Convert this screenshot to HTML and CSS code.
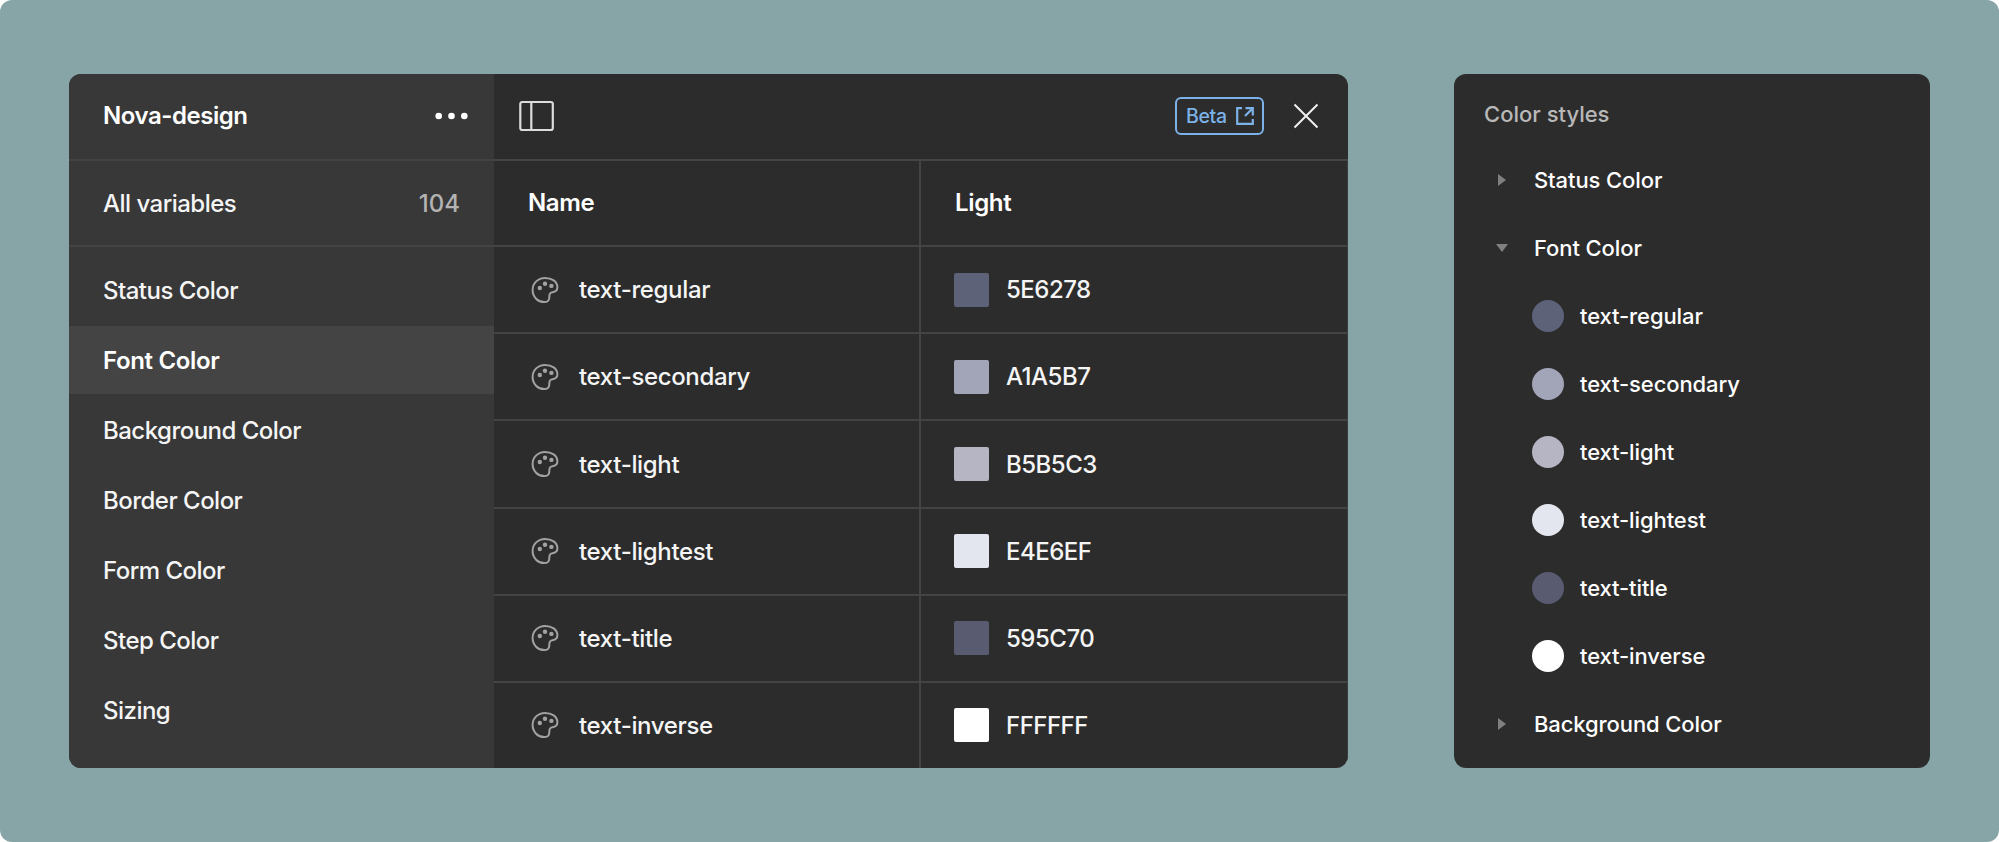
FILE: index.html
```html
<!DOCTYPE html>
<html lang="en">
<head>
<meta charset="utf-8">
<title>Nova-design variables</title>
<link rel="stylesheet" href="styles.css">
</head>
<body>
<svg class="defs" width="0" height="0" aria-hidden="true">
  <symbol id="palette" viewBox="0 0 28 28">
    <path d="M14 1.9C7 1.9 1.6 7.2 1.6 14c0 7 5.400 12.100 11.600 12.100 2.700 0 4.800-1 5-3.900.200-3.600.200-5.500 3.300-5.900 3-.400 4.900-2.200 4.900-5C26.400 5.400 20.600 1.900 14 1.900z" fill="none" stroke="currentColor" stroke-width="2"/>
    <circle cx="8.800" cy="12" r="2.200" fill="currentColor"/>
    <circle cx="14" cy="7.700" r="2.200" fill="currentColor"/>
    <circle cx="20.400" cy="9.900" r="2.200" fill="currentColor"/>
  </symbol>
</svg>
<main class="stage">
  <section class="variables">
    <aside class="sidebar">
      <header class="sidebar-head">
        <h1 class="title">Nova-design</h1>
        <svg class="dots" width="33" height="8" viewBox="0 0 33 8"><circle cx="3.700" cy="4" r="3.300"/><circle cx="16.500" cy="4" r="3.300"/><circle cx="29.300" cy="4" r="3.300"/></svg>
      </header>
      <div class="all"><span>All variables</span><span class="count">104</span></div>
      <nav class="groups">
        <a class="group">Status Color</a>
        <a class="group active">Font Color</a>
        <a class="group">Background Color</a>
        <a class="group">Border Color</a>
        <a class="group">Form Color</a>
        <a class="group">Step Color</a>
        <a class="group">Sizing</a>
      </nav>
    </aside>
    <div class="content">
      <header class="toolbar">
        <svg class="panel-icon" width="36" height="32" viewBox="0 0 36 32"><rect x="1.300" y="2" width="32.500" height="28" rx="2"/><path d="M12.300 2v28"/></svg>
        <div class="actions">
          <span class="beta">Beta
            <svg width="18" height="18" viewBox="0 0 18 18"><path d="M6 1.200H1.200v15.600h15.600V12M9.500 1.200h7.300v7.300M16.800 1.200L9 9"/></svg>
          </span>
          <svg class="close" width="26" height="26" viewBox="0 0 26 26"><path d="M1.500 1.500l23 23M24.500 1.500l-23 23"/></svg>
        </div>
      </header>
      <div class="table">
        <div class="cell head">Name</div><div class="cell head value">Light</div>
        <div class="cell"><svg class="palette"><use href="#palette"/></svg>text-regular</div><div class="cell value"><i class="swatch regular"></i>5E6278</div>
        <div class="cell"><svg class="palette"><use href="#palette"/></svg>text-secondary</div><div class="cell value"><i class="swatch secondary"></i>A1A5B7</div>
        <div class="cell"><svg class="palette"><use href="#palette"/></svg>text-light</div><div class="cell value"><i class="swatch light"></i>B5B5C3</div>
        <div class="cell"><svg class="palette"><use href="#palette"/></svg>text-lightest</div><div class="cell value"><i class="swatch lightest"></i>E4E6EF</div>
        <div class="cell"><svg class="palette"><use href="#palette"/></svg>text-title</div><div class="cell value"><i class="swatch heading"></i>595C70</div>
        <div class="cell"><svg class="palette"><use href="#palette"/></svg>text-inverse</div><div class="cell value"><i class="swatch inverse"></i>FFFFFF</div>
      </div>
    </div>
  </section>
  <section class="styles">
    <h2 class="styles-title">Color styles</h2>
    <ul class="tree">
      <li class="folder"><svg class="caret" viewBox="0 0 12 12"><path d="M2 0l8 6-8 6z"/></svg>Status Color</li>
      <li class="folder"><svg class="caret" viewBox="0 0 12 12"><path d="M0 2h12L6 10z"/></svg>Font Color</li>
      <li class="style"><i class="dot regular"></i>text-regular</li>
      <li class="style"><i class="dot secondary"></i>text-secondary</li>
      <li class="style"><i class="dot light"></i>text-light</li>
      <li class="style"><i class="dot lightest"></i>text-lightest</li>
      <li class="style"><i class="dot heading"></i>text-title</li>
      <li class="style"><i class="dot inverse"></i>text-inverse</li>
      <li class="folder"><svg class="caret" viewBox="0 0 12 12"><path d="M2 0l8 6-8 6z"/></svg>Background Color</li>
    </ul>
  </section>
</main>
</body>
</html>
```
FILE: styles.css
```css
* { box-sizing: border-box; }
body { margin: 0; background: #fff; font-family: Inter, sans-serif; font-weight: 450; color: #fff; }
.defs { display: block; }
.stage {
  display: flex;
  justify-content: space-between;
  width: 1999px;
  height: 842px;
  padding: 74px 69px;
  border-radius: 12px;
  background: #87a5a7;
}
.variables {
  display: flex;
  width: 1279px;
  height: 694px;
  border-radius: 12px;
  overflow: hidden;
  background: #2c2c2c;
  font-size: 24px;
  letter-spacing: -0.350px;
  color: #f5f5f5;
}
.sidebar { width: 426px; background: #383838; letter-spacing: -0.520px; }
.sidebar-head, .all {
  display: flex;
  align-items: center;
  justify-content: space-between;
  padding-left: 34px;
  border-bottom: 2px solid #434343;
}
.sidebar-head { height: 87px; padding-right: 26px; padding-bottom: 2px; }
.all { height: 86px; padding-right: 34px; }
.count { color: #b3b3b3; letter-spacing: 0; }
.title { margin: 0; font-size: 24px; font-weight: 600; letter-spacing: -0.450px; color: #fff; }
.dots { fill: #fff; }
.groups { padding-top: 9px; }
.group {
  display: flex;
  align-items: center;
  height: 68px;
  margin-bottom: 2.150px;
  padding-left: 34px;
}
.group.active { background: #444; font-weight: 600; letter-spacing: -0.350px; color: #fff; }
.content { flex: 1; }
.toolbar {
  display: flex;
  align-items: center;
  justify-content: space-between;
  height: 87px;
  padding: 0 29px 1px 25px;
  border-bottom: 2px solid #444;
}
.panel-icon { fill: none; stroke: #dcdcdc; stroke-width: 2.200; }
.actions { display: flex; align-items: center; gap: 29px; }
.beta {
  display: flex;
  align-items: center;
  justify-content: space-between;
  width: 89px;
  height: 38px;
  padding: 0 8px 0 9px;
  border: 2px solid #7cb2e8;
  border-radius: 6px;
  font-size: 19.500px;
  font-weight: 500;
  color: #7cb2e8;
}
.beta svg { fill: none; stroke: currentColor; stroke-width: 2.200; }
.close { fill: none; stroke: #f0f0f0; stroke-width: 2; }
.table {
  display: grid;
  grid-template-columns: 427px 426px;
  grid-template-rows: 86.300px;
  grid-auto-rows: 87.100px;
  border-right: 1px solid #3c3c3c;
}
.cell {
  display: flex;
  align-items: center;
  padding-left: 37px;
  border-right: 2px solid #444;
  border-bottom: 2px solid #444;
}
.cell.head { padding-left: 34px; padding-bottom: 1px; font-weight: 600; color: #fff; }
.cell.value { padding-left: 33px; border-right: 0; letter-spacing: -0.500px; }
.cell.head.value { padding-left: 34px; letter-spacing: -0.350px; }
.palette { width: 28px; height: 28px; margin-right: 20px; color: #a2a2a2; }
.swatch { width: 35px; height: 34px; margin-right: 17px; border-radius: 2px; }
.regular { background: #5e6278; }
.secondary { background: #a1a5b7; }
.light { background: #b5b5c3; }
.lightest { background: #e4e6ef; }
.heading { background: #595c70; }
.inverse { background: #fff; }
.styles {
  width: 476px;
  height: 694px;
  padding: 26px 0 0 30px;
  border-radius: 12px;
  overflow: hidden;
  background: #2c2c2c;
  font-size: 22px;
  letter-spacing: -0.100px;
}
.styles-title { margin: 0; font-size: 22px; font-weight: 500; line-height: 28px; letter-spacing: 0; color: #b8b8b8; }
.tree { margin: 18px 0 0; padding: 0; list-style: none; }
.folder, .style { display: flex; align-items: center; height: 68px; }
.folder { padding-left: 12px; }
.style { padding-left: 48px; }
.caret { width: 12px; height: 12px; margin-right: 26px; fill: #808080; }
.dot { width: 32px; height: 32px; margin-right: 16px; border-radius: 50%; }
```
